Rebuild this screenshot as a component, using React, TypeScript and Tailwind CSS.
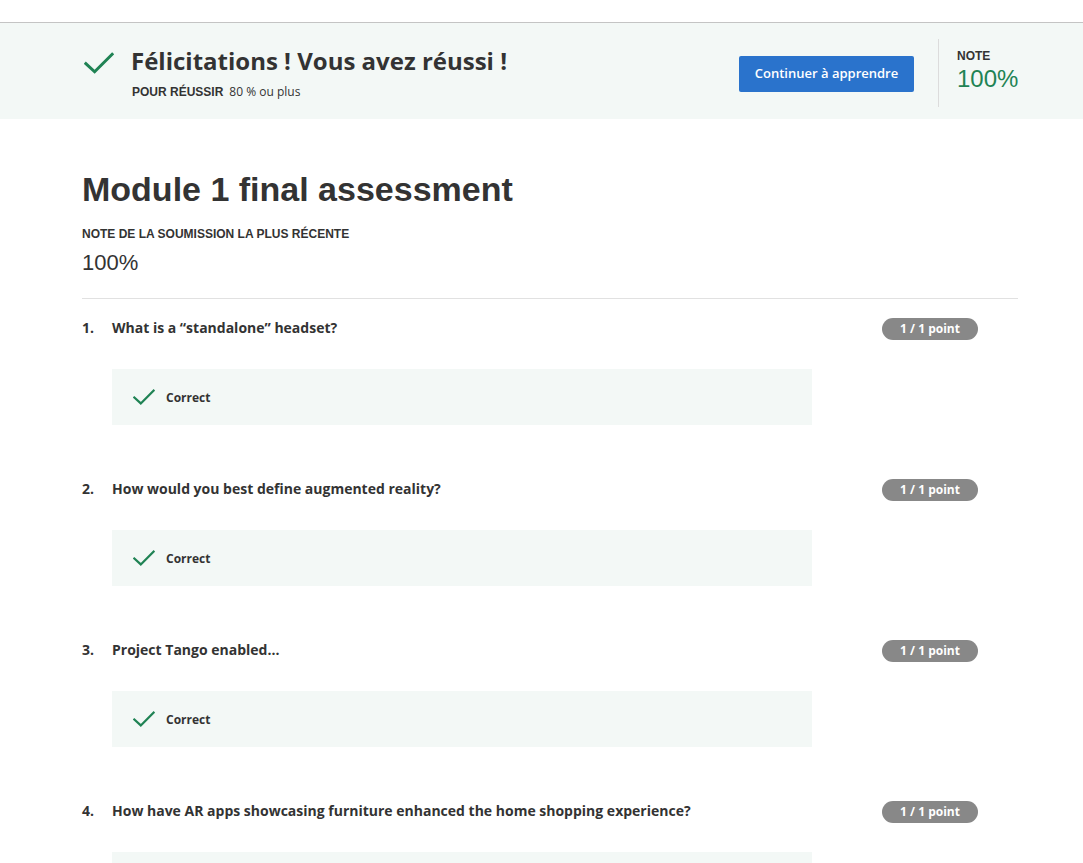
const questions = [
  'What is a \u201cstandalone\u201d headset?',
  'How would you best define augmented reality?',
  'Project Tango enabled...',
  'How have AR apps showcasing furniture enhanced the home shopping experience?',
];

function Check({ size }: { size: number }) {
  return (
    <svg width={size} height={size} viewBox="0 0 24 24" fill="none">
      <path d="M1.5 12.5 L8.5 19 L22.5 5" stroke="#1f8354" strokeWidth="2.4" strokeLinecap="square" />
    </svg>
  );
}

export default function App() {
  return (
    <div className="min-h-[863px] bg-white text-[#333] font-['Open_Sans',sans-serif]">
      <div className="h-[23px] border-b border-[#c4c4c4]" />

      {/* result banner */}
      <div className="h-[96px] bg-[#f3f8f6]">
        <div className="ml-[82px] w-[936px] h-full flex items-center">
          <div className="flex items-start flex-1">
            <div className="mt-[5px] ml-[2px] mr-[17px]">
              <Check size={30} />
            </div>
            <div className="mt-[2px]">
              <h1 className="text-[24px] leading-[32px] font-bold">Félicitations ! Vous avez réussi !</h1>
              <p className="mt-[7px] text-[12px] leading-[16px] ml-[1px]">
                <span className="font-['Liberation_Sans',sans-serif] font-bold">POUR RÉUSSIR</span>
                <span className="ml-[6px]">80 % ou plus</span>
              </p>
            </div>
          </div>
          <button className="h-[36px] w-[175px] rounded-[2px] bg-[#2a73cc] text-white text-[13px] font-semibold mt-[6px]">
            Continuer à apprendre
          </button>
          <div className="ml-[24px] h-[68px] w-px bg-[#dcdcdc] mt-[4px]" />
          <div className="ml-[18px] w-[61px] self-start mt-[26px] font-['Liberation_Sans',sans-serif]">
            <div className="text-[12px] leading-[14px] font-bold">NOTE</div>
            <div className="mt-[1px] text-[24px] leading-[30px] text-[#1f8354]">100%</div>
          </div>
        </div>
      </div>

      {/* main */}
      <div className="ml-[82px] w-[936px] pt-[51px]">
        <h2 className="font-['Liberation_Sans',sans-serif] font-bold text-[34px] leading-[38px]">Module 1 final assessment</h2>
        <div className="mt-[19px] font-['Liberation_Sans',sans-serif] text-[12px] leading-[14px] font-bold">
          NOTE DE LA SOUMISSION LA PLUS RÉCENTE
        </div>
        <div className="mt-[9px] font-['Liberation_Sans',sans-serif] text-[22px] leading-[26px]">100%</div>
        <div className="mt-[22px] border-t border-[#e1e1e1]" />

        <div className="pt-[18px]">
          {questions.map((q, i) => (
            <div key={i} className="h-[161px]">
              <div className="flex items-start">
                <span className="w-[30px] text-[14px] leading-[22px] font-bold">{i + 1}.</span>
                <span className="flex-1 text-[14px] leading-[22px] font-bold">{q}</span>
                <span className="mt-[1px] mr-[40px] h-[22px] w-[96px] rounded-full bg-[#888888] text-white text-[12px] font-bold flex items-center justify-center">
                  1 / 1 point
                </span>
              </div>
              <div className="mt-[29px] ml-[30px] w-[700px] h-[56px] bg-[#f3f8f6] flex items-center pl-[21px]">
                <Check size={22} />
                <span className="ml-[11px] mt-[2px] text-[12px] font-bold">Correct</span>
              </div>
            </div>
          ))}
        </div>
      </div>
    </div>
  );
}
